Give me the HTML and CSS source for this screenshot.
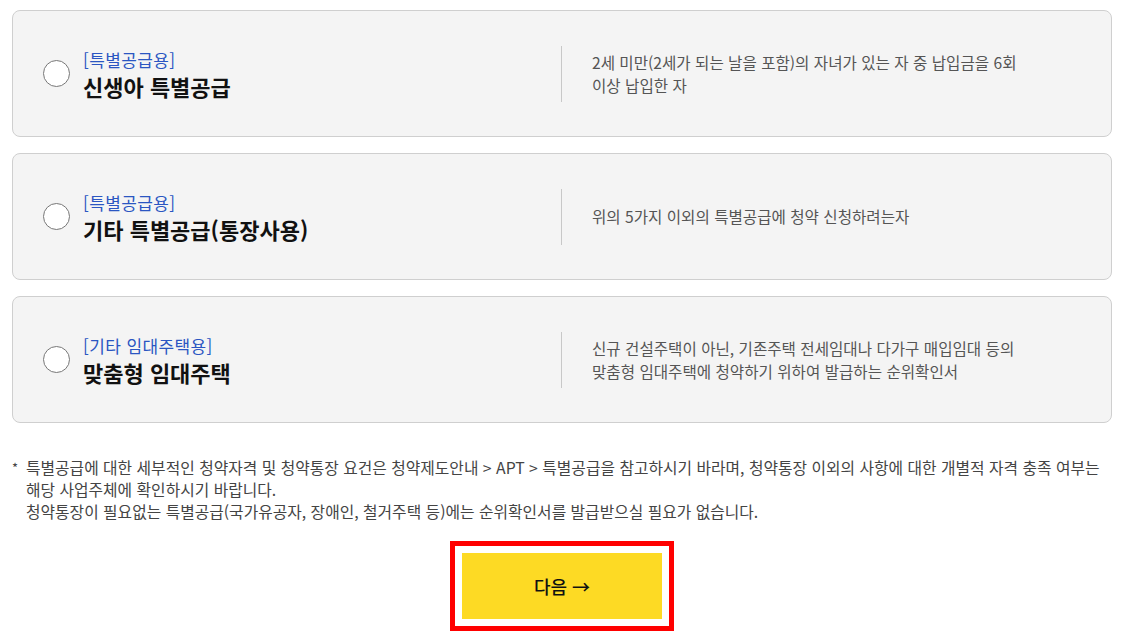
FILE: index.html
```html
<!DOCTYPE html>
<html lang="ko">
<head>
  <meta charset="UTF-8" />
  <title>순위확인서 발급</title>
  <link rel="stylesheet" href="styles.css">
</head>
<body>
  <div class="wrap">
    <ul class="typeList">
      <li class="typeItem">
        <label class="typeHead">
          <span class="radio"></span>
          <span class="typeName">
            <span class="cate">[특별공급용]</span>
            <strong>신생아 특별공급</strong>
          </span>
        </label>
        <p class="typeDesc">2세 미만(2세가 되는 날을 포함)의 자녀가 있는 자 중 납입금을 6회<br>이상 납입한 자</p>
      </li>
      <li class="typeItem">
        <label class="typeHead">
          <span class="radio"></span>
          <span class="typeName">
            <span class="cate">[특별공급용]</span>
            <strong>기타 특별공급(통장사용)</strong>
          </span>
        </label>
        <p class="typeDesc">위의 5가지 이외의 특별공급에 청약 신청하려는자</p>
      </li>
      <li class="typeItem">
        <label class="typeHead">
          <span class="radio"></span>
          <span class="typeName">
            <span class="cate">[기타 임대주택용]</span>
            <strong>맞춤형 임대주택</strong>
          </span>
        </label>
        <p class="typeDesc">신규 건설주택이 아닌, 기존주택 전세임대나 다가구 매입임대 등의<br>맞춤형 임대주택에 청약하기 위하여 발급하는 순위확인서</p>
      </li>
    </ul>

    <div class="notice">
      <span class="star">*</span>
      <p>특별공급에 대한 세부적인 청약자격 및 청약통장 요건은 청약제도안내 &gt; APT &gt; 특별공급을 참고하시기 바라며, 청약통장 이외의 사항에 대한 개별적 자격 충족 여부는 해당 사업주체에 확인하시기 바랍니다.<br>청약통장이 필요없는 특별공급(국가유공자, 장애인, 철거주택 등)에는 순위확인서를 발급받으실 필요가 없습니다.</p>
    </div>

    <div class="btnArea">
      <div class="btnBox">
        <button class="btnNext">다음 →</button>
      </div>
    </div>
  </div>
</body>
</html>
```

FILE: styles.css
```css
body {
  margin: 0;
  font-family: "Noto Sans CJK KR", "Noto Sans", sans-serif;
  background: #fff;
  color: #222;
}
.wrap {
  padding: 10px 16px 0 12px;
}
.typeList {
  list-style: none;
  margin: 0;
  padding: 0;
  display: flex;
  flex-direction: column;
  gap: 16px;
}
.typeItem {
  display: flex;
  align-items: center;
  height: 127px;
  background: #f4f4f4;
  border: 1px solid #cfcfcf;
  border-radius: 8px;
  box-sizing: border-box;
}
.typeHead {
  display: flex;
  align-items: center;
  width: 518px;
  padding-left: 30px;
  box-sizing: border-box;
}
.radio {
  width: 25px;
  height: 25px;
  border: 1px solid #777;
  border-radius: 50%;
  background: #fff;
  margin-right: 13px;
  flex-shrink: 0;
}
.typeName {
  display: flex;
  flex-direction: column;
}
.cate {
  color: #2b56c2;
  font-size: 17px;
  line-height: 24px;
  letter-spacing: 0.4px;
}
.typeName strong {
  font-size: 22px;
  line-height: 28px;
  font-weight: 700;
  color: #111;
}
.typeDesc {
  margin: 0 0 0 30px;
  border-left: 1px solid #c8c8c8;
  padding-left: 30px;
  height: 56px;
  display: flex;
  align-items: center;
  font-size: 15.6px;
  line-height: 23px;
  color: #555;
}
.notice {
  display: flex;
  margin-top: 34px;
  font-size: 15.8px;
  line-height: 22px;
  color: #444;
}
.star {
  width: 13px;
  flex-shrink: 0;
  font-size: 13px;
}
.notice p {
  margin: 0;
  padding-left: 1px;
}
.btnArea {
  display: flex;
  justify-content: center;
  margin-top: 18px;
}
.btnBox {
  border: 5px solid #f00;
  padding: 7px;
  display: flex;
}
.btnNext {
  width: 200px;
  height: 66px;
  border: none;
  background: #fdda24;
  font-family: inherit;
  font-size: 18px;
  font-weight: 500;
  color: #111;
  cursor: pointer;
}
```
